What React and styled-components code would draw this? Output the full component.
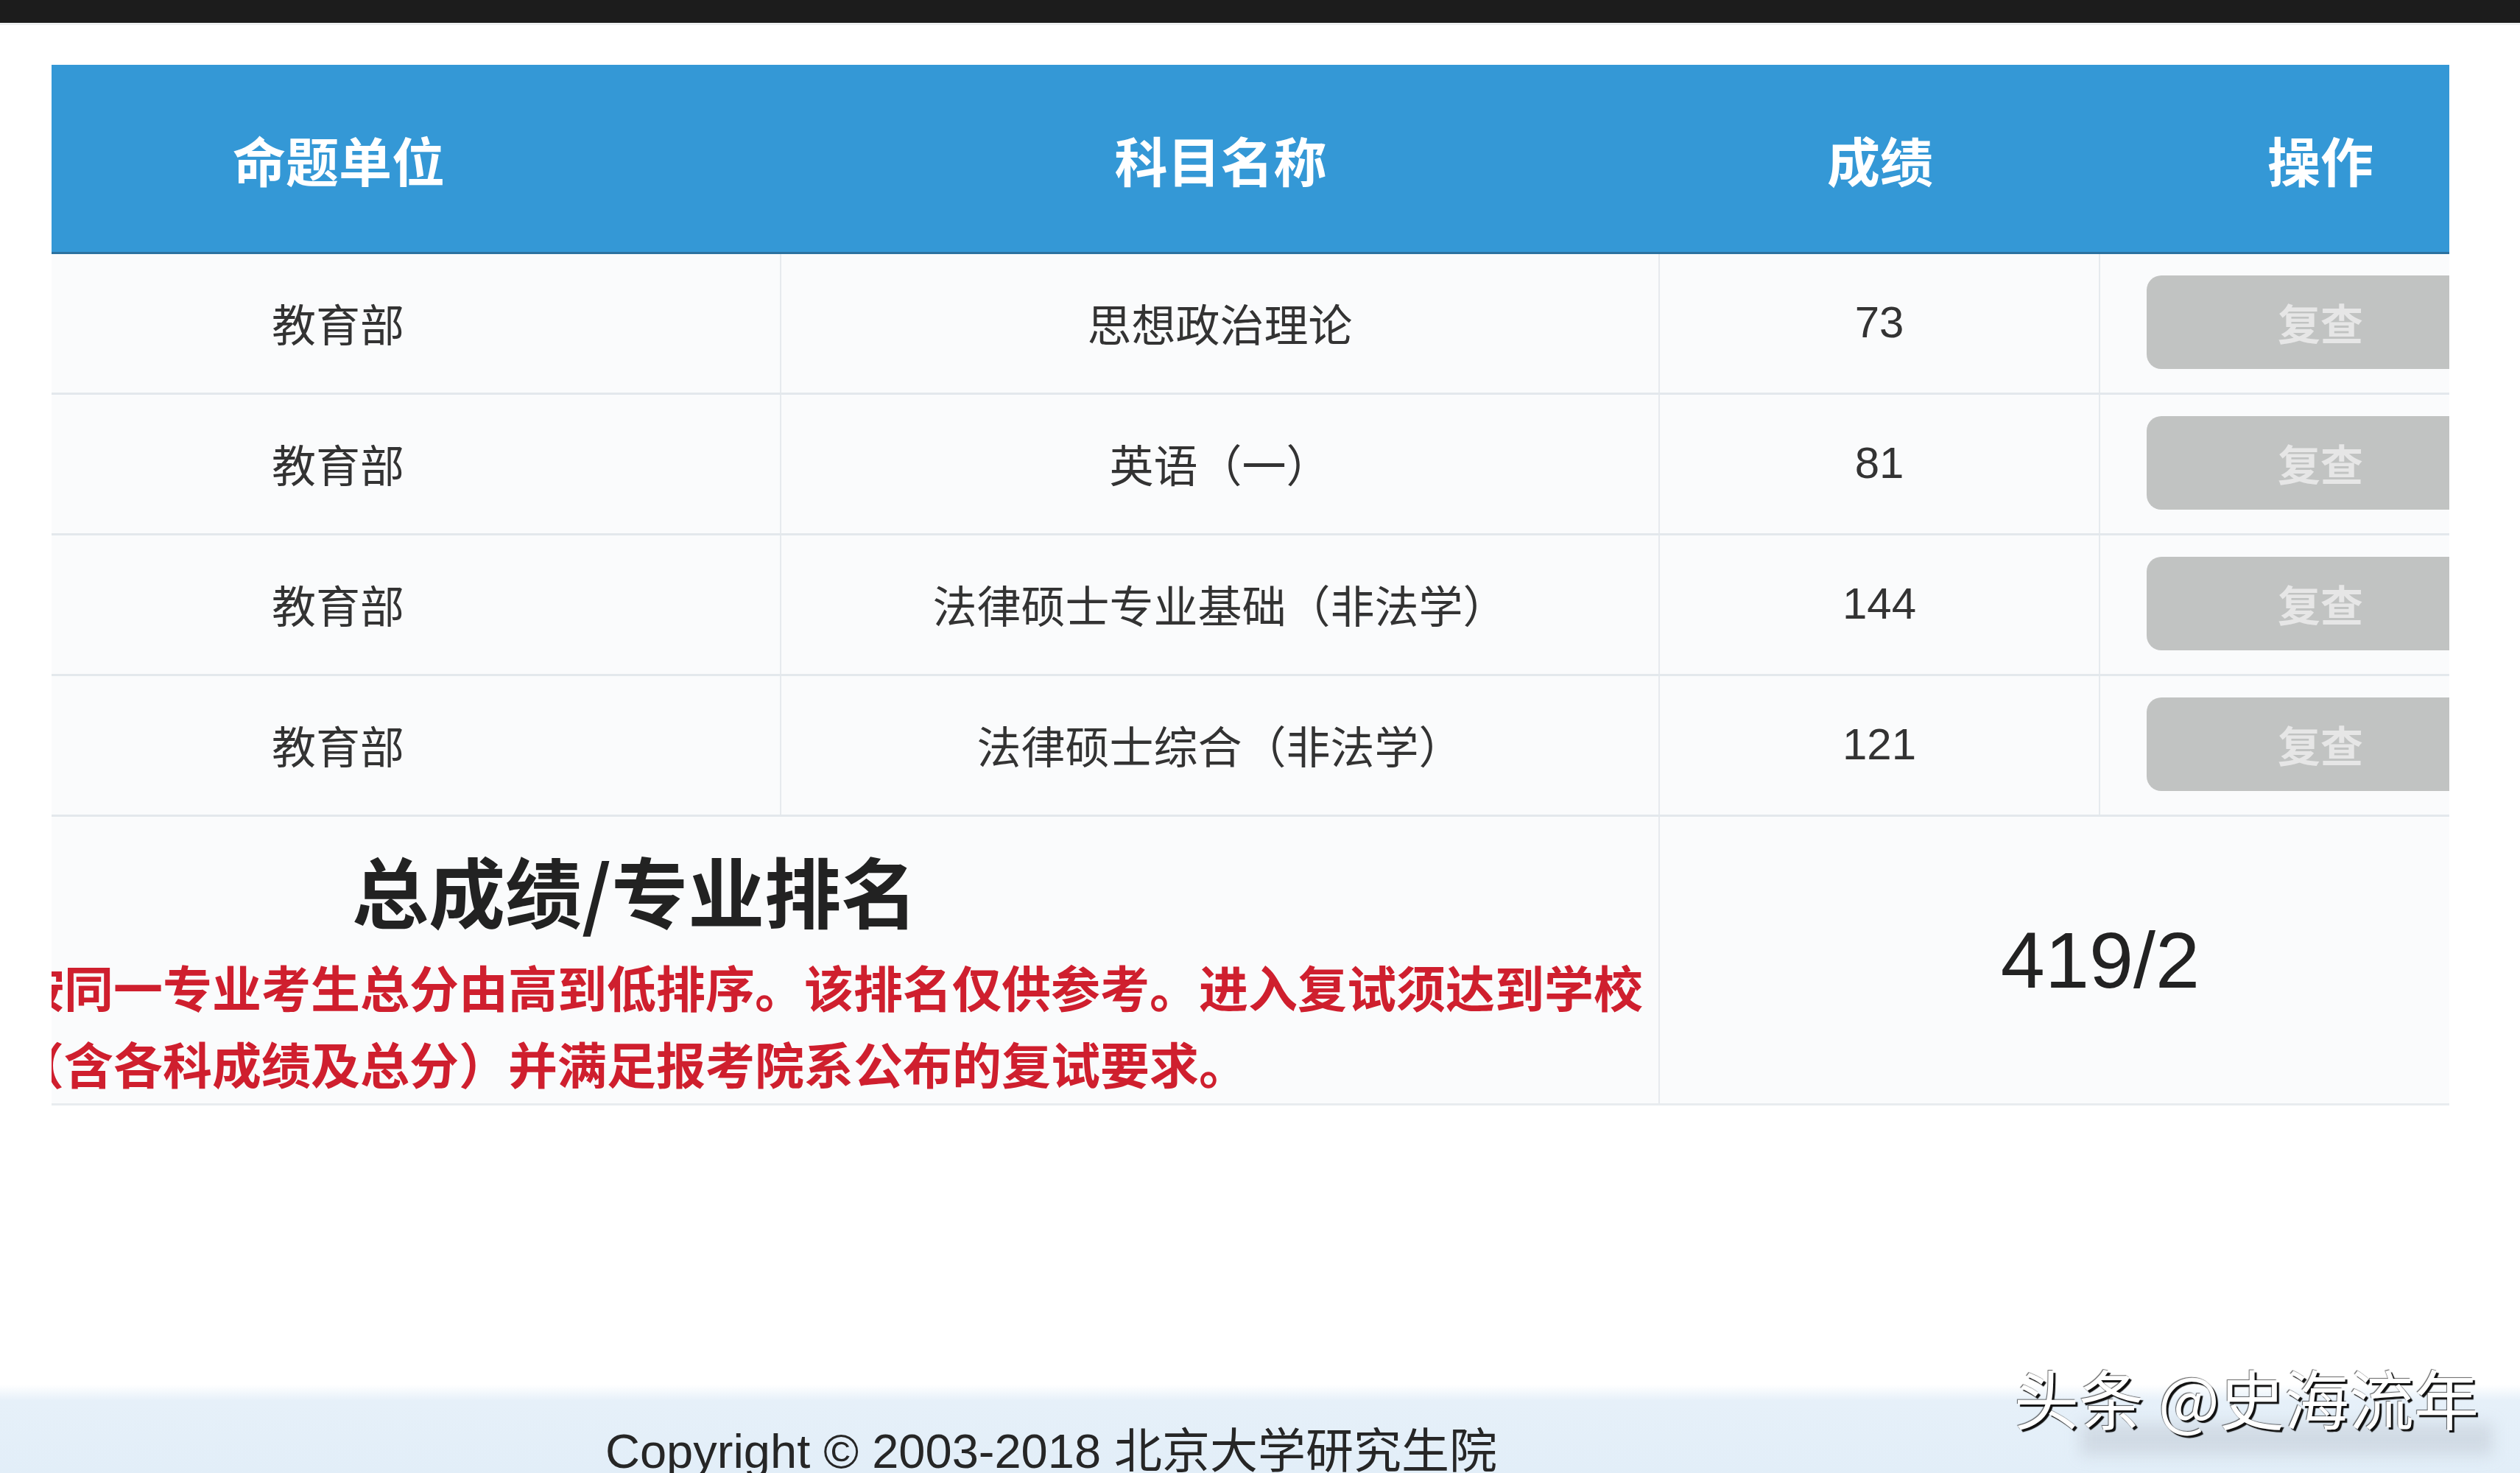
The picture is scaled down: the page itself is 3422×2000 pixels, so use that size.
import React from "react";
import styled, { createGlobalStyle } from "styled-components";

const GlobalStyle = createGlobalStyle`
  html, body {
    margin: 0;
    padding: 0;
    background: #fff;
  }
  body {
    overflow: hidden;
    font-family: "Liberation Sans", "Noto Sans CJK SC", sans-serif;
  }
`;

const COLUMNS = "1202px 1193px 598px 598px";

const Page = styled.div`
  position: relative;
  height: 2000px;
  display: flex;
  flex-direction: column;
  overflow: hidden;
`;

const TopBar = styled.div`
  height: 31px;
  background: #1c1c1c;
  border-bottom: 3px solid #eef0f1;
`;

const Main = styled.div`
  flex: 1;
  padding-top: 54px;
`;

// the screenshot cuts the page on both sides, so the table is wider than its frame
const Frame = styled.div`
  margin-left: 70px;
  width: 3256px;
  overflow: hidden;
`;

const Table = styled.div`
  width: 3591px;
  margin-left: -211px;
`;

const HeadRow = styled.div`
  display: grid;
  grid-template-columns: ${COLUMNS};
  height: 257px;
  box-sizing: border-box;
  background: #3498d6;
  border-bottom: 3px solid #2b72a0;
`;

const HeadCell = styled.div`
  display: flex;
  align-items: center;
  justify-content: center;
  color: #fff;
  font-family: "Noto Sans CJK SC", sans-serif;
  font-size: 72px;
  font-weight: 700;
`;

const Row = styled.div`
  display: grid;
  grid-template-columns: ${COLUMNS};
  height: 191px;
  box-sizing: border-box;
  background: #fafbfc;
  border-bottom: 3px solid #e3e8ec;
`;

const Cell = styled.div`
  display: flex;
  align-items: center;
  justify-content: center;
  padding-bottom: 4px;
  font-size: 60px;
  color: #333;
  border-right: ${(p) => (p.$last ? "none" : "2px solid #e6eaee")};
`;

const RecheckButton = styled.button`
  width: 472px;
  height: 127px;
  border: none;
  border-radius: 20px;
  background: #c1c3c2;
  color: #e6e6e6;
  font-family: "Noto Sans CJK SC", sans-serif;
  font-size: 58px;
  font-weight: 700;
  cursor: not-allowed;
`;

const SummaryRow = styled.div`
  display: grid;
  grid-template-columns: 2395px 1196px;
  height: 392px;
  box-sizing: border-box;
  background: #fafbfc;
  border-bottom: 3px solid #e8ecef;
`;

const SummaryLabel = styled.div`
  display: flex;
  flex-direction: column;
  padding: 36px 0 0 161px;
  border-right: 2px solid #e6eaee;
`;

const SummaryTitle = styled.div`
  margin-left: 458px;
  font-family: "Noto Sans CJK SC", sans-serif;
  font-size: 104px;
  font-weight: 700;
  line-height: 125px;
  color: #222;
`;

const Notice = styled.div`
  margin-top: 17px;
  font-family: "Noto Sans CJK SC", sans-serif;
  font-size: 67px;
  font-weight: 700;
  line-height: 104px;
  color: #cf1f2e;
  white-space: nowrap;
`;

const SummaryValue = styled.div`
  display: flex;
  align-items: center;
  justify-content: center;
  font-size: 108px;
  color: #222;
`;

const Footer = styled.div`
  position: relative;
  height: 120px;
  box-sizing: border-box;
  padding: 53px 0 0 822px;
  background: linear-gradient(to bottom, #fff 0, #e6f0f9 22px, #e2eef8 100%);
  font-size: 65px;
  line-height: 76px;
  color: #262626;
  white-space: nowrap;
`;

const FooterGhost = styled.div`
  position: absolute;
  left: 2825px;
  top: 52px;
  width: 560px;
  height: 44px;
  background: rgba(160, 170, 180, 0.28);
  filter: blur(10px);
`;

const Watermark = styled.div`
  position: absolute;
  left: 2735px;
  top: 1852px;
  font-family: "Noto Sans CJK SC", sans-serif;
  font-size: 88px;
  line-height: 1;
  color: #fff;
  white-space: nowrap;
  text-shadow: 3px 3px 1px #111, -1px -1px 1px rgba(0, 0, 0, 0.6);
`;

const subjects = [
  { unit: "教育部", name: "思想政治理论", score: "73" },
  { unit: "教育部", name: "英语（一）", score: "81" },
  { unit: "教育部", name: "法律硕士专业基础（非法学）", score: "144" },
  { unit: "教育部", name: "法律硕士综合（非法学）", score: "121" },
];

export default function App() {
  return (
    <>
      <GlobalStyle />
      <Page>
        <TopBar />
        <Main>
          <Frame>
            <Table>
              <HeadRow>
                <HeadCell>命题单位</HeadCell>
                <HeadCell>科目名称</HeadCell>
                <HeadCell>成绩</HeadCell>
                <HeadCell>操作</HeadCell>
              </HeadRow>
              {subjects.map((s) => (
                <Row key={s.name}>
                  <Cell>{s.unit}</Cell>
                  <Cell>{s.name}</Cell>
                  <Cell>{s.score}</Cell>
                  <Cell $last>
                    <RecheckButton disabled>复查</RecheckButton>
                  </Cell>
                </Row>
              ))}
              <SummaryRow>
                <SummaryLabel>
                  <SummaryTitle>总成绩/专业排名</SummaryTitle>
                  <Notice>
                    按同一专业考生总分由高到低排序。该排名仅供参考。进入复试须达到学校
                    <br />
                    （含各科成绩及总分）并满足报考院系公布的复试要求。
                  </Notice>
                </SummaryLabel>
                <SummaryValue>419/2</SummaryValue>
              </SummaryRow>
            </Table>
          </Frame>
        </Main>
        <Footer>
          Copyright © 2003-2018 北京大学研究生院
          <FooterGhost />
        </Footer>
        <Watermark>头条 @史海流年</Watermark>
      </Page>
    </>
  );
}
